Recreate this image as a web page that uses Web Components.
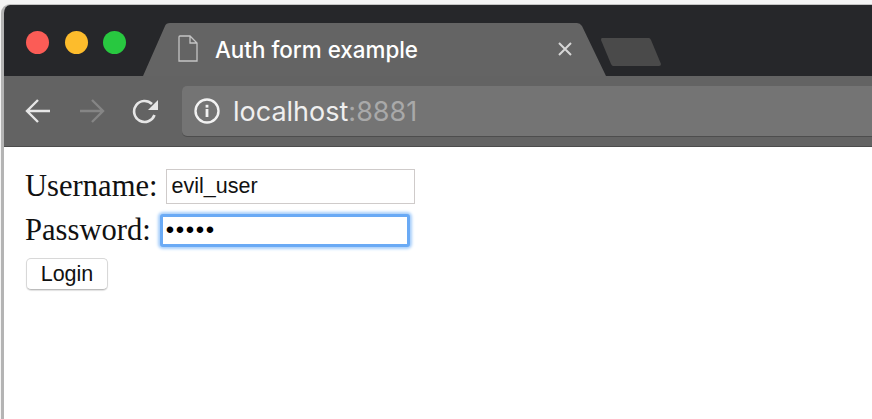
<!DOCTYPE html>
<html>
<head>
<meta charset="utf-8">
<title>Auth form example</title>
<style>
html, body { margin: 0; height: 100%; background: #fff; overflow: hidden; }
</style>
</head>
<body>
<browser-window>
  <browser-tabs slot="tabs" title="Auth form example"></browser-tabs>
  <browser-toolbar slot="toolbar" host="localhost" port=":8881"></browser-toolbar>
  <login-form></login-form>
</browser-window>

<script>
class BrowserWindow extends HTMLElement {
  constructor() {
    super()
    this.attachShadow({ mode: "open" })
    this.shadowRoot.innerHTML = `
      <style>
        :host { display: block; height: 419px; padding: 4px 0 0 1px; box-sizing: border-box; background: #f4f4f4; }
        .win { height: 100%; display: flex; flex-direction: column; border-left: 3px solid #b4b4b4; border-top: 1px solid #c4c4c4; border-top-left-radius: 9px; overflow: hidden; }
        .page { flex: 1; background: #fff; }
      </style>
      <div class="win">
        <slot name="tabs"></slot>
        <slot name="toolbar"></slot>
        <div class="page"><slot></slot></div>
      </div>
    `
  }
}

class BrowserTabs extends HTMLElement {
  constructor() {
    super()
    this.attachShadow({ mode: "open" })
    this.shadowRoot.innerHTML = `
      <style>
        :host { display: block; height: 71px; background: #26272a; font-family: "Liberation Sans", Arial, sans-serif; }
        .row { height: 100%; display: flex; align-items: flex-end; }
        .lights { display: flex; gap: 15.5px; padding: 0 0 0 22px; align-self: flex-start; margin-top: 26px; width: 108px; box-sizing: border-box; flex: none; }
        .lights i { width: 23px; height: 23px; border-radius: 50%; flex: none; }
        .tab { width: 463px; height: 53px; flex: none; margin-left: 31px; position: relative; color: #fff; display: flex; align-items: center; }
        .tab svg.shape { position: absolute; left: 0; top: 0; }
        .doc { position: relative; margin: -2px 0 0 35px; flex: none; }
        .name { position: relative; font-size: 22.4px; margin: -1px 0 0 17px; width: 342px; flex: none; white-space: nowrap; font-family: "Inter", "Liberation Sans", sans-serif; font-weight: 500; }
        .x { position: relative; margin: -1px 0 0 0; flex: none; }
        .ghost { margin: 0 0 10px -6px; flex: none; }
      </style>
      <div class="row">
        <div class="lights">
          <i style="background:#fb5c56"></i><i style="background:#fdbc2c"></i><i style="background:#28c840"></i>
        </div>
        <div class="tab">
          <svg class="shape" width="463" height="53" viewBox="0 0 463 53"><path d="M0 53 L22 3 Q23 0 27 0 L434 0 Q437 0 439 3 L463 53 Z" fill="#646464"/></svg>
          <svg class="doc" width="20" height="27" viewBox="0 0 20 27" fill="none" stroke="#c4c4c4" stroke-width="1.3"><path d="M2 1 H12 L19 8 V26 H1 V2 Q1 1 2 1 Z M12 1 V8 H19"/></svg>
          <span class="name">${this.getAttribute("title")}</span>
          <svg class="x" width="16" height="16" viewBox="0 0 16 16" stroke="#d6d6d6" stroke-width="2"><path d="M2 2 L14 14 M14 2 L2 14"/></svg>
        </div>
        <svg class="ghost" width="62" height="28" viewBox="0 0 62 28"><path d="M2 0 H49 Q50 0 51 2 L61 26 Q61 28 59 28 H13 Q12 28 11 26 L1 2 Q1 0 2 0 Z" fill="#4a4a4a"/></svg>
      </div>
    `
  }
}

class BrowserToolbar extends HTMLElement {
  constructor() {
    super()
    this.attachShadow({ mode: "open" })
    this.shadowRoot.innerHTML = `
      <style>
        :host { display: block; height: 71px; background: #636363; box-sizing: border-box; padding: 10px 0 0 21px; border-bottom: 1px solid #4c4c4c; font-family: "Inter", "Liberation Sans", sans-serif; }
        .row { display: flex; align-items: flex-start; }
        .nav { display: flex; gap: 28px; padding-top: 12px; width: 157px; flex: none; }
        .nav svg { flex: none; }
        .omni { flex: 1; height: 50px; background: #747474; border-radius: 5px 0 0 5px; box-shadow: 0 1px 0 #4d4d4d; display: flex; align-items: center; padding-left: 12px; font-size: 27px; color: #efefef; white-space: nowrap; }
        .omni svg { margin-right: 13px; flex: none; }
        .port { color: #a9a9a9; }
      </style>
      <div class="row">
        <div class="nav">
          <svg width="26" height="26" viewBox="0 0 26 26" fill="none" stroke="#e6e6e6" stroke-width="2.4"><path d="M25 13 H2 M13 2 L2 13 L13 24"/></svg>
          <svg width="26" height="26" viewBox="0 0 26 26" fill="none" stroke="#858585" stroke-width="2.4"><path d="M1 13 H24 M13 2 L24 13 L13 24"/></svg>
          <svg width="27" height="26" viewBox="0 0 27 26" style="margin-left:-1px"><path d="M22.5 17 A10.5 10.5 0 1 1 20 6" fill="none" stroke="#e6e6e6" stroke-width="2.6"/><path d="M26 2 V12 H16 Z" fill="#e6e6e6"/></svg>
        </div>
        <div class="omni">
          <svg width="26" height="26" viewBox="0 0 26 26"><circle cx="13" cy="13" r="11.5" fill="none" stroke="#f2f2f2" stroke-width="2.4"/><rect x="11.6" y="11" width="2.8" height="8" fill="#f2f2f2"/><rect x="11.6" y="6.8" width="2.8" height="2.8" fill="#f2f2f2"/></svg>
          <span>${this.getAttribute("host")}<span class="port">${this.getAttribute("port")}</span></span>
        </div>
      </div>
    `
  }
}

class LoginForm extends HTMLElement {
  constructor() {
    super()
    this.attachShadow({ mode: "open" })
    this.shadowRoot.innerHTML = `
      <style>
        :host { display: block; padding: 17px 0 0 21px; font-family: "Liberation Serif", "Times New Roman", serif; font-size: 30.6px; color: #111; }
        .line { display: flex; align-items: center; height: 44px; }
        label { white-space: nowrap; }
        .field { box-sizing: border-box; height: 35px; width: 249px; margin-left: 8px; border: 1px solid #cfcbca; background: #fff; font-family: "Liberation Sans", Arial, sans-serif; font-size: 21.5px; padding-left: 5px; display: flex; align-items: center; }
        .focus { width: 250px; height: 33px; border: 3px solid #6aaaf5; border-radius: 3px; box-shadow: 0 0 3px 2px #a8cffb; font-size: 24px; letter-spacing: 1.6px; margin-left: 9px; padding-left: 3px; color: #000; }
        button { display: block; margin: 6px 0 0 1px; width: 82px; height: 32px; box-sizing: border-box; background: #fff; border: 1px solid #d8d8d8; border-bottom-color: #bcbcbc; border-radius: 5px; box-shadow: 0 1px 1px #e2e2e2; font-family: "Liberation Sans", Arial, sans-serif; font-size: 21.5px; color: #111; padding: 0; }
      </style>
      <div class="line"><label>Username:</label><div class="field">evil_user</div></div>
      <div class="line"><label>Password:</label><div class="field focus">•••••</div></div>
      <button>Login</button>
    `
  }
}

customElements.define("browser-window", BrowserWindow)
customElements.define("browser-tabs", BrowserTabs)
customElements.define("browser-toolbar", BrowserToolbar)
customElements.define("login-form", LoginForm)
</script>
</body>
</html>
